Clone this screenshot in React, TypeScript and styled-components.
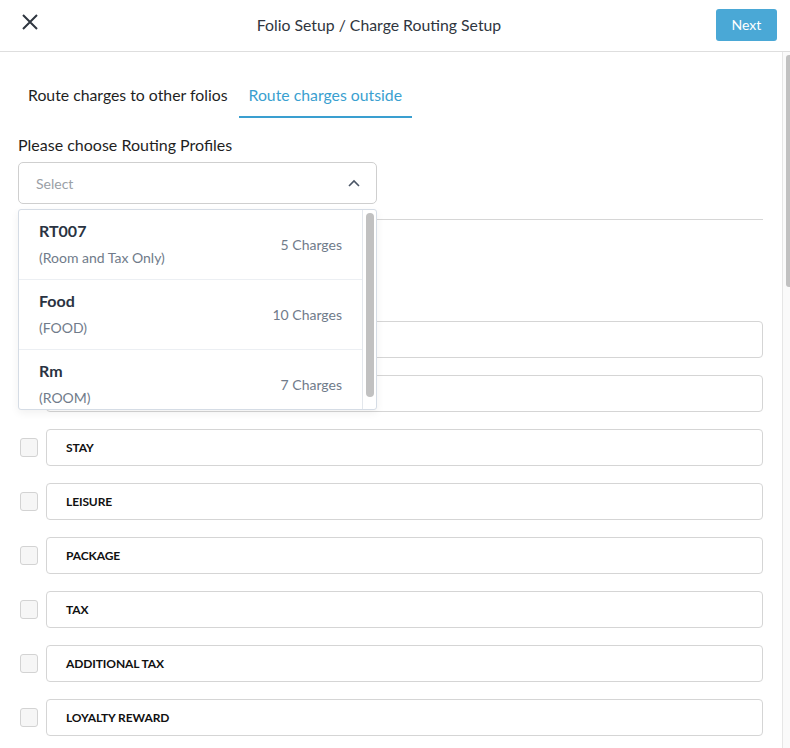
import React from 'react';
import styled, { createGlobalStyle } from 'styled-components';

const GlobalStyle = createGlobalStyle`
    html, body {
        margin: 0;
        padding: 0;
        height: 100%;
        overflow: hidden;
        background: #fff;
        font-family: Lato, "Open Sans", sans-serif;
        color: #222;
    }
    * { box-sizing: border-box; }
`

const Page = styled.div`
    display: flex;
    flex-direction: column;
    height: 100vh;
`

const Header = styled.header`
    display: flex;
    align-items: center;
    justify-content: space-between;
    height: 52px;
    padding: 0 13px 2px 21px;
    border-bottom: 1px solid #dedede;
    flex-shrink: 0;
`

const CloseButton = styled.button`
    display: flex;
    background: none;
    border: none;
    padding: 0;
    margin-top: -5px;
    cursor: pointer;
`

const Title = styled.h1`
    margin: 0 0 0 3px;
    font-size: 15.8px;
    font-weight: 400;
    color: #2f3640;
`

const NextButton = styled.button`
    width: 61px;
    height: 32px;
    border: none;
    border-radius: 3px;
    background: #4aa8d6;
    color: #fff;
    font-family: inherit;
    font-size: 14px;
    cursor: pointer;
`

const Frame = styled.div`
    flex: 1;
    display: flex;
    min-height: 0;
`

const Body = styled.main`
    flex: 1;
    overflow: hidden;
    padding: 23px 19px 30px 18px;
`

const PageTrack = styled.div`
    width: 8px;
    flex-shrink: 0;
    padding: 3px 0 0 3px;
    background: #fafafa;
    border-left: 1px solid #e6e6e6;
`

const PageThumb = styled.div`
    height: 232px;
    background: #c1c1c1;
    border-radius: 3px 0 0 3px;
`

const Tabs = styled.div`
    display: flex;
    gap: 1px;
`

const Tab = styled.button<{ $active?: boolean }>`
    background: none;
    border: none;
    border-bottom: 2px solid ${p => (p.$active ? '#3a9fd0' : 'transparent')};
    padding: 10px 10px 11px;
    font-family: inherit;
    font-size: 15.8px;
    line-height: 20px;
    color: ${p => (p.$active ? '#3a9fd0' : '#1f1f1f')};
    cursor: pointer;
`

const FieldLabel = styled.div`
    margin-top: 17px;
    font-size: 16px;
    line-height: 20px;
    color: #1f1f1f;
`

const SelectWrap = styled.div`
    position: relative;
    width: 359px;
    margin-top: 7px;
`

const SelectBox = styled.div`
    display: flex;
    align-items: center;
    justify-content: space-between;
    height: 42px;
    padding: 0 16px 0 17px;
    border: 1px solid #cfcfcf;
    border-radius: 5px;
    font-size: 14px;
    color: #9aa0a6;
`

const Menu = styled.div`
    position: absolute;
    top: calc(100% + 5px);
    left: 0;
    width: 100%;
    height: 201px;
    display: flex;
    background: #fff;
    border: 1px solid #d5dce5;
    border-radius: 3px;
    box-shadow: 0 3px 8px rgba(0, 0, 0, 0.06);
    overflow: hidden;
    z-index: 10;
`

const MenuList = styled.div`
    flex: 1;
    overflow: hidden;
`

const MenuTrack = styled.div`
    width: 14px;
    flex-shrink: 0;
    padding: 3px 2px 0 3px;
    border-left: 1px solid #e3e7ec;
`

const MenuThumb = styled.div`
    height: 184px;
    background: #c1c1c1;
    border-radius: 5px;
`

const MenuItem = styled.div`
    display: flex;
    align-items: center;
    justify-content: space-between;
    height: 70px;
    padding: 0 20px;
    border-bottom: 1px solid #eceff3;
`

const ItemName = styled.div`
    font-size: 16px;
    font-weight: 700;
    line-height: 20px;
    color: #2a3342;
    margin-bottom: 7px;
`

const ItemCode = styled.div`
    font-size: 14px;
    line-height: 20px;
    color: #707b8a;
`

const ItemCount = styled.div`
    font-size: 14px;
    color: #707b8a;
`

const Divider = styled.hr`
    margin: 15px 0 0;
    border: none;
    border-top: 1px solid #d6d6d6;
`

const ChargesHead = styled.div`
    height: 101px;
    padding-top: 24px;
    font-size: 15px;
    color: #1f1f1f;
`

const Rows = styled.div`
    display: flex;
    flex-direction: column;
    gap: 17px;
`

const Row = styled.label`
    display: flex;
    align-items: center;
    gap: 8px;
    padding-left: 2px;
`

const Check = styled.span`
    width: 18px;
    height: 19px;
    border: 1px solid #d3d3d3;
    border-radius: 3px;
    background: #f6f6f6;
    flex-shrink: 0;
`

const ChargeBox = styled.div`
    flex: 1;
    display: flex;
    align-items: center;
    height: 37px;
    padding-left: 19px;
    border: 1px solid #d5d5d5;
    border-radius: 4px;
    font-size: 12px;
    font-weight: 700;
    color: #111;
    letter-spacing: -0.1px;
`

const profiles = [
    { name: 'RT007', code: '(Room and Tax Only)', count: '5 Charges' },
    { name: 'Food', code: '(FOOD)', count: '10 Charges' },
    { name: 'Rm', code: '(ROOM)', count: '7 Charges' },
]

const charges = [
    'ROOM',
    'FOOD',
    'STAY',
    'LEISURE',
    'PACKAGE',
    'TAX',
    'ADDITIONAL TAX',
    'LOYALTY REWARD',
    'MISCELLANEOUS',
]

const App = () => {
    return (
        <Page>
            <GlobalStyle />
            <Header>
                <CloseButton aria-label='close'>
                    <svg width='18' height='18' viewBox='0 0 18 18'>
                        <path d='M2 2 L16 16 M16 2 L2 16' stroke='#2f3640' strokeWidth='2' fill='none' />
                    </svg>
                </CloseButton>
                <Title>Folio Setup / Charge Routing Setup</Title>
                <NextButton>Next</NextButton>
            </Header>

            <Frame>
                <Body>
                    <Tabs>
                        <Tab>Route charges to other folios</Tab>
                        <Tab $active>Route charges outside</Tab>
                    </Tabs>

                    <FieldLabel>Please choose Routing Profiles</FieldLabel>
                    <SelectWrap>
                        <SelectBox>
                            <span>Select</span>
                            <svg width='12' height='8' viewBox='0 0 12 8'>
                                <path d='M1 7 L6 2 L11 7' stroke='#4a5565' strokeWidth='1.6' fill='none' />
                            </svg>
                        </SelectBox>
                        <Menu>
                            <MenuList>
                                {profiles.map(p => (
                                    <MenuItem key={p.name}>
                                        <div>
                                            <ItemName>{p.name}</ItemName>
                                            <ItemCode>{p.code}</ItemCode>
                                        </div>
                                        <ItemCount>{p.count}</ItemCount>
                                    </MenuItem>
                                ))}
                            </MenuList>
                            <MenuTrack>
                                <MenuThumb />
                            </MenuTrack>
                        </Menu>
                    </SelectWrap>

                    <Divider />
                    <ChargesHead>Charges</ChargesHead>

                    <Rows>
                        {charges.map(c => (
                            <Row key={c}>
                                <Check />
                                <ChargeBox>{c}</ChargeBox>
                            </Row>
                        ))}
                    </Rows>
                </Body>
                <PageTrack>
                    <PageThumb />
                </PageTrack>
            </Frame>
        </Page>
    )
}

export default App;
